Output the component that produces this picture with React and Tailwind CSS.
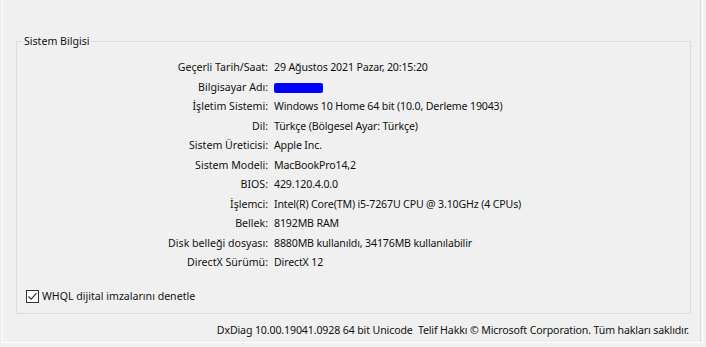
export default function App() {
  const rows = [
    ["Geçerli Tarih/Saat:", "29 Ağustos 2021 Pazar, 20:15:20"],
    ["Bilgisayar Adı:", null],
    ["İşletim Sistemi:", "Windows 10 Home 64 bit (10.0, Derleme 19043)"],
    ["Dil:", "Türkçe (Bölgesel Ayar: Türkçe)"],
    ["Sistem Üreticisi:", "Apple Inc."],
    ["Sistem Modeli:", "MacBookPro14,2"],
    ["BIOS:", "429.120.4.0.0"],
    ["İşlemci:", "Intel(R) Core(TM) i5-7267U CPU @ 3.10GHz (4 CPUs)"],
    ["Bellek:", "8192MB RAM"],
    ["Disk belleği dosyası:", "8880MB kullanıldı, 34176MB kullanılabilir"],
    ["DirectX Sürümü:", "DirectX 12"],
  ];
  return (
    <div className="w-[706px] h-[347px] bg-[#f0f0f0] overflow-hidden text-[10.6px] text-[#111] leading-none" style={{ fontFamily: '"Noto Sans", sans-serif' }}>
      <div className="ml-[2px] w-[701px] h-[343px] border-l border-b border-r border-l-white border-b-white border-r-white bg-[#f0f0f0]">
        <div className="w-[698px] h-[342px] border-r border-[#dadada] flex flex-col">
          <fieldset className="ml-[13px] mt-[33px] w-[675px] h-[281px] border border-[#dcdcdc] px-0 flex flex-col">
            <legend className="ml-[6px] px-[1px] h-[16px] leading-[16px]">Sistem Bilgisi</legend>
            <div className="flex flex-col mt-[9px]">
              {rows.map(([k, v]) => (
                <div key={k} className="flex h-[19.5px] items-center">
                  <div className="w-[251px] text-right shrink-0">{k}</div>
                  <div className="pl-[6px] whitespace-nowrap tracking-[-0.15px]">
                    {v === null ? (
                      <div className="w-[49px] h-[10px] bg-[#0000ff] rounded-[2px] mt-[1px]" />
                    ) : (
                      v
                    )}
                  </div>
                </div>
              ))}
            </div>
            <label className="flex items-center mt-[17px] ml-[9px]">
              <span className="w-[13px] h-[13px] border border-[#333] bg-white flex items-center justify-center">
                <svg width="11" height="11" viewBox="0 0 11 11">
                  <path d="M1.5 5.5 L4.2 8.2 L9.5 2.2" fill="none" stroke="#333" strokeWidth="1.2" />
                </svg>
              </span>
              <span className="ml-[3px]">WHQL dijital imzalarını denetle</span>
            </label>
          </fieldset>
          <div className="mt-[11px] pr-[11px] text-right whitespace-nowrap tracking-[-0.13px]">
            DxDiag 10.00.19041.0928 64 bit Unicode&nbsp; Telif Hakkı © Microsoft Corporation. Tüm hakları saklıdır.
          </div>
        </div>
      </div>
    </div>
  );
}
